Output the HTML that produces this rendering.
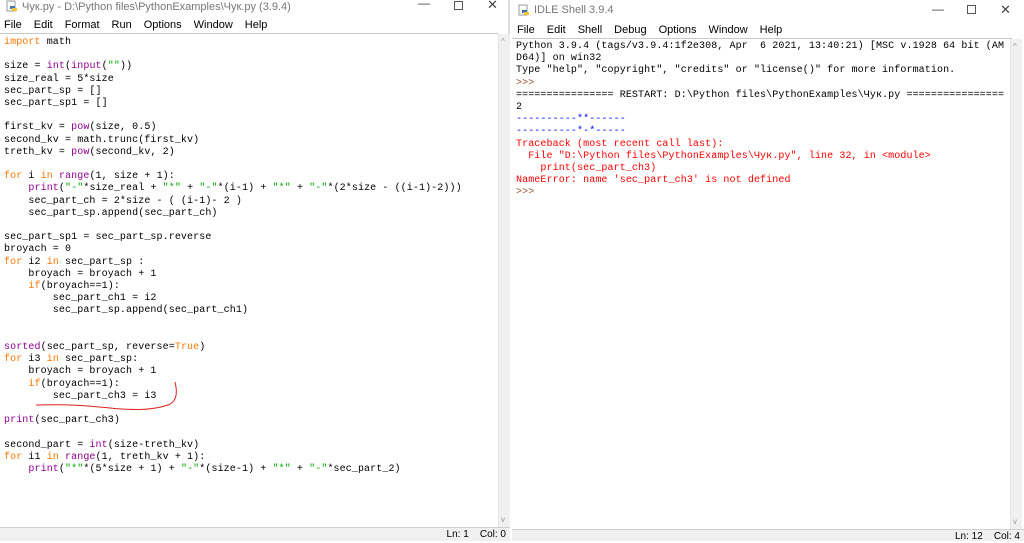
<!DOCTYPE html>
<html><head><meta charset="utf-8"><style>
*{margin:0;padding:0;box-sizing:border-box}
body{width:1024px;height:541px;overflow:hidden;background:#fff;position:relative;font-family:"Liberation Sans",sans-serif}
.win{position:absolute;background:#fff}
.title{position:absolute;font-size:11px;color:#777;white-space:nowrap}
.menu{position:absolute;font-size:11px;color:#000;white-space:nowrap}
.menu span{margin-right:12px}
.ctl{position:absolute;font-size:12px;color:#444}
pre{position:absolute;font-family:"Liberation Mono",monospace;font-size:10px;line-height:12.2px;letter-spacing:0.1px;color:#000}
.k{color:#ff7700}.b{color:#900090}.s{color:#00aa00}.bl{color:#0000ff}.r{color:#ff0000}.p{color:#a0522d}
.sb{position:absolute;background:#f0f0f0;border-left:1px solid #e4e4e4}
.status{position:absolute;background:#f0f0f0;border-top:1px solid #d0d0d0;font-size:10px;color:#000;text-align:right;white-space:nowrap}
.icon{position:absolute;width:12px;height:12px}
</style></head><body>
<!-- left window -->
<div class="win" style="left:0;top:0;width:510px;height:541px;border-right:2px solid #ddd">
 <svg class="icon" style="left:6px;top:0px" viewBox="0 0 12 12"><rect x="1" y="1" width="8" height="10" fill="#fff" stroke="#999"/><path d="M4 6h5v3H4z" fill="#3a75b0"/><path d="M6 8h5v3H6z" fill="#f2c230"/></svg>
 <div class="title" style="left:22px;top:1px">Чук.py - D:\Python files\PythonExamples\Чук.py (3.9.4)</div>
 <div class="ctl" style="left:418px;top:-4px">—</div>
 <div style="position:absolute;left:454px;top:1px;width:9px;height:9px;border:1px solid #555"></div>
 <div class="ctl" style="left:487px;top:-3px;font-size:13px">✕</div>
 <div class="menu" style="left:4px;top:19px"><span>File</span><span>Edit</span><span>Format</span><span>Run</span><span>Options</span><span>Window</span><span>Help</span></div>
 <div style="position:absolute;left:0;top:33px;width:498px;height:1px;background:#c8c8c8"></div>
 <pre style="left:4px;top:37px"><span class="k">import</span> math

size = <span class="b">int</span>(<span class="b">input</span>(<span class="s">""</span>))
size_real = 5*size
sec_part_sp = []
sec_part_sp1 = []

first_kv = <span class="b">pow</span>(size, 0.5)
second_kv = math.trunc(first_kv)
treth_kv = <span class="b">pow</span>(second_kv, 2)

<span class="k">for</span> i <span class="k">in</span> <span class="b">range</span>(1, size + 1):
    <span class="b">print</span>(<span class="s">"-"</span>*size_real + <span class="s">"*"</span> + <span class="s">"-"</span>*(i-1) + <span class="s">"*"</span> + <span class="s">"-"</span>*(2*size - ((i-1)-2)))
    sec_part_ch = 2*size - ( (i-1)- 2 )
    sec_part_sp.append(sec_part_ch)

sec_part_sp1 = sec_part_sp.reverse
broyach = 0
<span class="k">for</span> i2 <span class="k">in</span> sec_part_sp :
    broyach = broyach + 1
    <span class="k">if</span>(broyach==1):
        sec_part_ch1 = i2
        sec_part_sp.append(sec_part_ch1)


<span class="b">sorted</span>(sec_part_sp, reverse=<span class="k">True</span>)
<span class="k">for</span> i3 <span class="k">in</span> sec_part_sp:
    broyach = broyach + 1
    <span class="k">if</span>(broyach==1):
        sec_part_ch3 = i3

<span class="b">print</span>(sec_part_ch3)

second_part = <span class="b">int</span>(size-treth_kv)
<span class="k">for</span> i1 <span class="k">in</span> <span class="b">range</span>(1, treth_kv + 1):
    <span class="b">print</span>(<span class="s">"*"</span>*(5*size + 1) + <span class="s">"-"</span>*(size-1) + <span class="s">"*"</span> + <span class="s">"-"</span>*sec_part_2)</pre>
 <svg style="position:absolute;left:30px;top:380px" width="150" height="30"><path d="M145 2 C148 14 146 22 138 25 C120 31 100 30 80 28 C60 26 40 24 6 25" fill="none" stroke="#e02020" stroke-width="1"/></svg>
 <div class="sb" style="left:498px;top:34px;width:12px;height:493px"><div style="position:absolute;left:2px;top:3px;font-size:8px;color:#999">^</div><div style="position:absolute;left:2px;bottom:3px;font-size:8px;color:#999">v</div></div>
 <div class="status" style="left:0;top:527px;width:510px;height:14px;padding-right:4px;line-height:13px">Ln: 1&nbsp;&nbsp;&nbsp;&nbsp;Col: 0</div>
</div>
<!-- right window -->
<div class="win" style="left:512px;top:0;width:512px;height:541px">
 <svg class="icon" style="left:6px;top:4px" viewBox="0 0 12 12"><rect x="1" y="1" width="8" height="10" fill="#fff" stroke="#999"/><path d="M4 6h5v3H4z" fill="#3a75b0"/><path d="M6 8h5v3H6z" fill="#f2c230"/></svg>
 <div class="title" style="left:22px;top:4px">IDLE Shell 3.9.4</div>
 <div class="ctl" style="left:420px;top:2px">—</div>
 <div style="position:absolute;left:455px;top:5px;width:9px;height:9px;border:1px solid #555"></div>
 <div class="ctl" style="left:488px;top:2px;font-size:13px">✕</div>
 <div class="menu" style="left:5px;top:24px"><span>File</span><span>Edit</span><span>Shell</span><span>Debug</span><span>Options</span><span>Window</span><span>Help</span></div>
 <div style="position:absolute;left:0;top:38px;width:500px;height:1px;background:#c8c8c8"></div>
 <pre style="left:4px;top:41px">Python 3.9.4 (tags/v3.9.4:1f2e308, Apr  6 2021, 13:40:21) [MSC v.1928 64 bit (AM
D64)] on win32
Type "help", "copyright", "credits" or "license()" for more information.
<span class="p">&gt;&gt;&gt;</span>
================ RESTART: D:\Python files\PythonExamples\Чук.py ================
2
<span class="bl">----------**------</span>
<span class="bl">----------*-*-----</span>
<span class="r">Traceback (most recent call last):
  File "D:\Python files\PythonExamples\Чук.py", line 32, in &lt;module&gt;
    print(sec_part_ch3)
NameError: name 'sec_part_ch3' is not defined</span>
<span class="p">&gt;&gt;&gt;</span></pre>
 <div class="sb" style="left:498px;top:39px;width:12px;height:490px"><div style="position:absolute;left:2px;top:3px;font-size:8px;color:#999">^</div><div style="position:absolute;left:2px;bottom:3px;font-size:8px;color:#999">v</div></div>
 <div class="status" style="left:0;top:529px;width:512px;height:12px;padding-right:4px;line-height:13px">Ln: 12&nbsp;&nbsp;&nbsp;&nbsp;Col: 4</div>
</div>
</body></html>
